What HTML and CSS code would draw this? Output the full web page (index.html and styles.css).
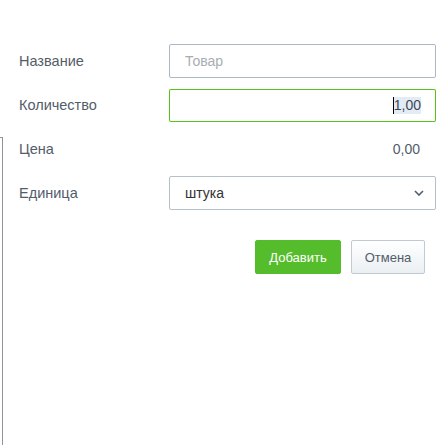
FILE: index.html
```html
<html>
    <head>
        <title>Добавить товар</title>
        <link rel="stylesheet" href="styles.css">
    </head>
    <body>
        <div class="side-edge"></div>
        <form class="product-form">
            <div class="row">
                <label class="label">Название</label>
                <input class="field" type="text" placeholder="Товар">
            </div>
            <div class="row">
                <label class="label">Количество</label>
                <div class="qty">
                    <span class="caret"></span><span class="selected">1,00</span>
                </div>
            </div>
            <div class="row">
                <label class="label">Цена</label>
                <div class="price">0,00</div>
            </div>
            <div class="row">
                <label class="label">Единица</label>
                <div class="field select">
                    <span>штука</span>
                    <svg class="arrow" width="10" height="6" viewBox="0 0 10 6">
                        <path d="M1 1 L5 5 L9 1" fill="none" stroke="#535c69" stroke-width="1.6"/>
                    </svg>
                </div>
            </div>
            <div class="buttons">
                <button type="button" class="btn btn-add">Добавить</button>
                <button type="button" class="btn btn-cancel">Отмена</button>
            </div>
        </form>
    </body>
</html>
```

FILE: styles.css
```css
html{
    overflow: hidden;
}
body{
    margin: 0;
    background: #fff;
    font-family: "Liberation Sans", Arial, sans-serif;
    font-size: 14px;
    color: #535c69;
    position: relative;
}
.side-edge{
    position: absolute;
    left: -20px;
    top: 137px;
    width: 22px;
    height: 308px;
    border-top: 1px solid #8d949b;
    border-right: 1px solid #8d949b;
}
.product-form{
    padding: 44px 4px 0 19px;
}
.row{
    display: grid;
    grid-template-columns: 150px 1fr;
    align-items: center;
    height: 34px;
    margin-bottom: 10px;
}
.label{
    color: #535c69;
    font-size: 14.5px;
}
.field{
    box-sizing: border-box;
    height: 34px;
    width: 100%;
    border: 1px solid #a9b8c4;
    border-radius: 2px;
    padding: 0 15px;
    font-family: "Liberation Sans", Arial, sans-serif;
    font-size: 14px;
    color: #535c69;
    background: #fff;
    outline: none;
}
.field::placeholder{
    color: #a8adb4;
}
/* focused quantity box */
.qty{
    box-sizing: border-box;
    height: 33px;
    border-radius: 2px;
    box-shadow: inset 0 0 0 1px #52c41a;
    padding: 0 15px;
    display: flex;
    align-items: center;
    justify-content: flex-end;
}
.caret{
    display: inline-block;
    width: 1px;
    height: 17px;
    background: #000;
}
.selected{
    background: #e3ecf5;
    color: #3d4756;
    line-height: 17px;
}
.price{
    text-align: right;
    padding-right: 16px;
}
.select{
    display: flex;
    align-items: center;
    justify-content: space-between;
    color: #333;
    border-color: #b4c1cb;
    padding-right: 11px;
}
.buttons{
    display: flex;
    justify-content: flex-end;
    gap: 10px;
    padding-top: 20px;
    padding-right: 11px;
}
.btn{
    height: 34px;
    border-radius: 2px;
    font-family: "Liberation Sans", Arial, sans-serif;
    font-size: 13px;
    padding: 0;
}
.btn-add{
    width: 86px;
    background: #55bd2c;
    border: 1px solid #55bd2c;
    color: #fff;
}
.btn-cancel{
    width: 74px;
    background: linear-gradient(#ffffff, #eaeff3);
    border: 1px solid #c1cad2;
    color: #535c69;
}
```
